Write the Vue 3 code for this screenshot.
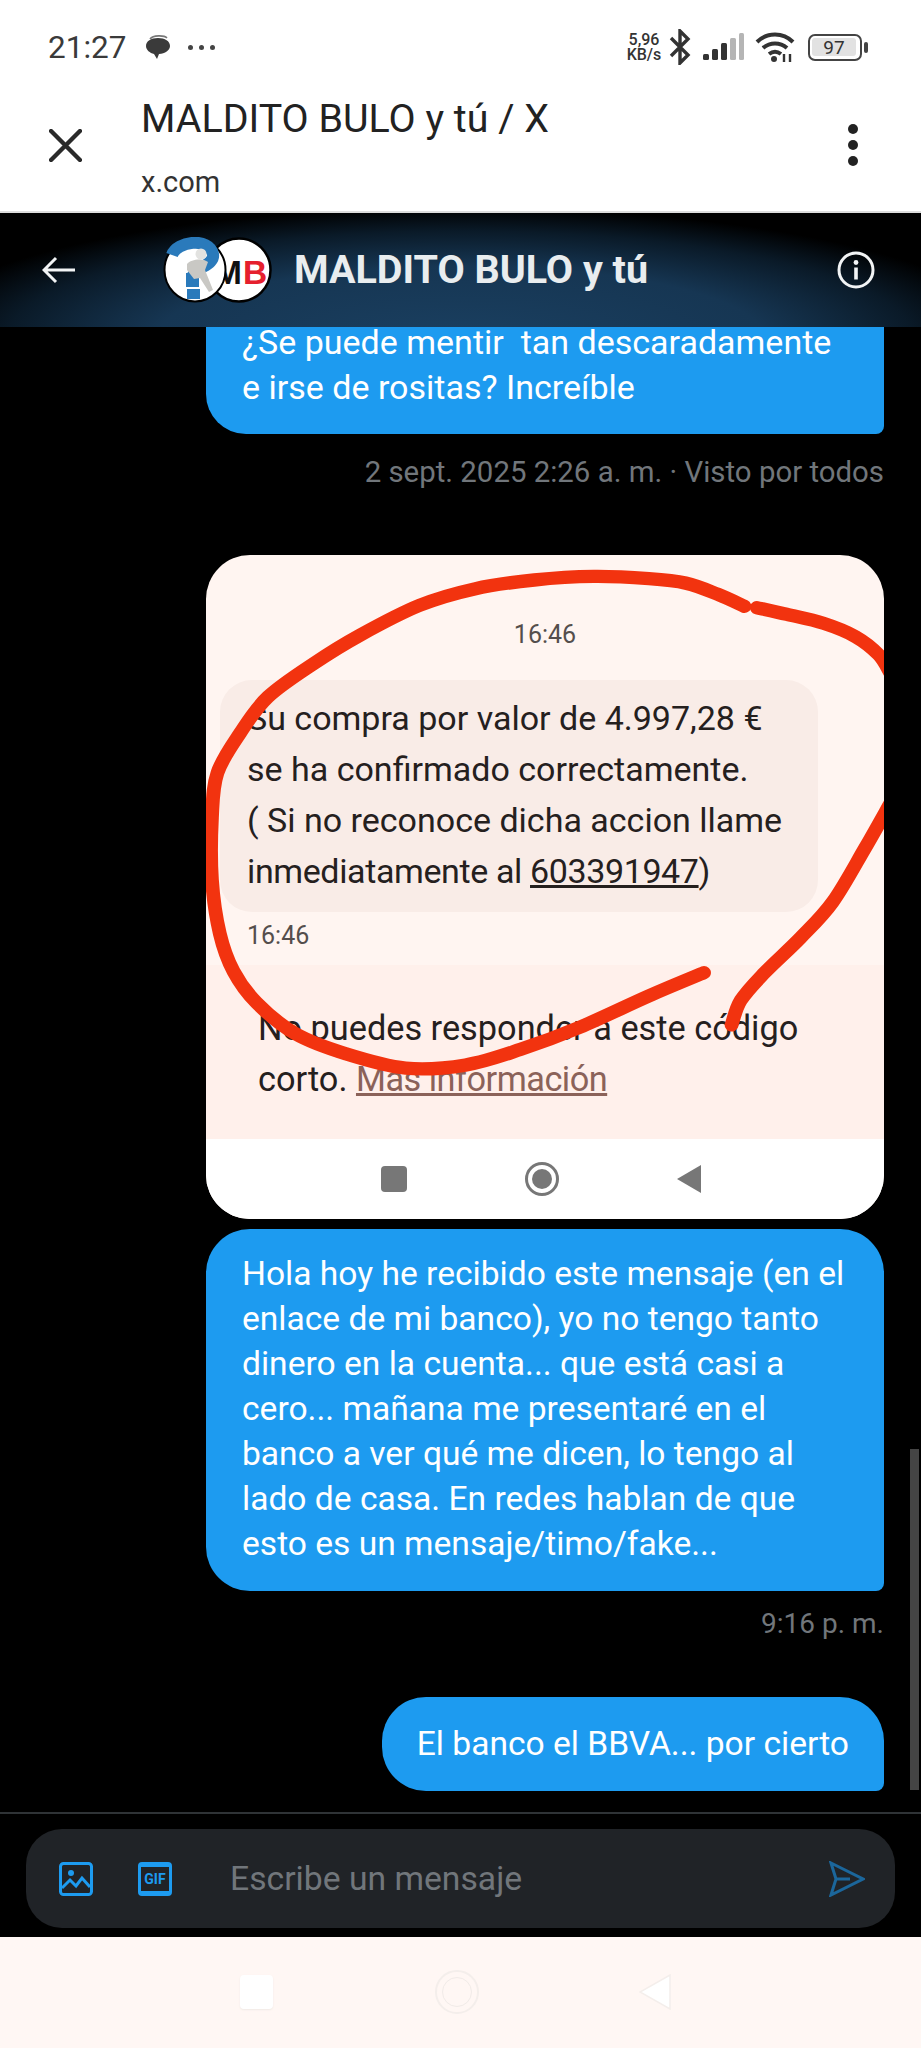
<script setup>
const smooth = (p) => {
  let d = `M${p[0][0]} ${p[0][1]}`
  for (let i = 0; i < p.length - 1; i++) {
    const a = p[Math.max(i - 1, 0)], b = p[i], c = p[i + 1], e = p[Math.min(i + 2, p.length - 1)]
    const c1 = [b[0] + (c[0] - a[0]) / 6, b[1] + (c[1] - a[1]) / 6]
    const c2 = [c[0] - (e[0] - b[0]) / 6, c[1] - (e[1] - b[1]) / 6]
    d += ` C${c1[0]} ${c1[1]} ${c2[0]} ${c2[1]} ${c[0]} ${c[1]}`
  }
  return d
}
const strokes = [
  [[1525,295],[1500,255],[1450,215],[1380,185],[1300,165],[1235,150]],
  [[1208,147],[1150,120],[1080,95],[1000,85],[880,80],[750,88],[620,108],[500,145],[370,212],[270,275],[170,350],[110,430],[60,520],[48,620],[48,760],[65,880],[95,965],[145,1035],[230,1105],[340,1150],[470,1182],[600,1175],[720,1140],[850,1090],[1000,1020],[1120,968]],
  [[1525,590],[1470,690],[1400,810],[1330,890],[1250,970],[1200,1030],[1180,1085]]
].map(smooth)
</script>

<template>
  <div class="screen">
    <div class="status">
      <div class="status-left">
        <span class="clock">21:27</span>
        <svg class="bubble-ic" viewBox="0 0 26 24">
          <path d="M5 4C8 0 19 0 22 3" fill="none" stroke="#777" stroke-width="1.6"/>
          <path d="M13 3C6 3 1 6 1 11c0 4 4 7 8 8l3 5 2-5c6 0 11-4 11-8 0-5-5-8-12-8z" fill="#3a3a3a"/>
        </svg>
        <span class="dots"><i></i><i></i><i></i></span>
      </div>
      <div class="status-right">
        <div class="speed"><span>5,96</span><span>KB/s</span></div>
        <svg class="bt" viewBox="0 0 22 36"><path d="M2 9l17 17-8 8V2l8 8L2 27" fill="none" stroke="#333" stroke-width="3.4"/></svg>
        <svg class="signal" viewBox="0 0 42 28">
          <rect x="0" y="21" width="6" height="6" rx="1.5" fill="#333"/>
          <rect x="9" y="16" width="6" height="11" rx="1.5" fill="#333"/>
          <rect x="18" y="10" width="6" height="17" rx="1.5" fill="#333"/>
          <rect x="27" y="5" width="6" height="22" rx="1.5" fill="#b5b5b5"/>
          <rect x="36" y="0" width="5" height="27" rx="1.5" fill="#b5b5b5"/>
        </svg>
        <svg class="wifi" viewBox="0 0 40 30">
          <path d="M2 10C12 0 28 0 38 10M8 16c7-6 17-6 24 0M14 22c4-3 8-3 12 0" fill="none" stroke="#333" stroke-width="4"/>
          <circle cx="19" cy="27" r="3" fill="#333"/>
          <path d="M29 22v8M35 22v8" stroke="#333" stroke-width="2.4"/>
        </svg>
        <div class="battery"><div class="batt-body"><span class="batt-fill">97</span></div><i class="batt-nub"></i></div>
      </div>
    </div>

    <div class="titlebar">
      <svg class="close" viewBox="0 0 32 32"><path d="M2 2l28 28M30 2L2 30" stroke="#2a2a2a" stroke-width="4.2" stroke-linecap="round" fill="none"/></svg>
      <div class="title-text">
        <div class="page-title">MALDITO BULO y tú / X</div>
        <div class="page-url">x.com</div>
      </div>
      <div class="kebab"><i></i><i></i><i></i></div>
    </div>

    <div class="chat-head">
      <svg class="back" viewBox="0 0 34 28"><path d="M33 14H3M14 2L2 14l12 12" fill="none" stroke="#f2f4f5" stroke-width="3"/></svg>
      <div class="avatars">
        <svg class="av av-right" viewBox="0 0 66 66">
          <circle cx="33" cy="33" r="31.5" fill="#fff" stroke="#000" stroke-width="2.5"/>
          <text x="8" y="47" font-family="Liberation Sans" font-weight="700" font-size="33.5" fill="#111">M</text>
          <text x="37" y="47" font-family="Liberation Sans" font-weight="700" font-size="33.5" fill="#e5202e">B</text>
        </svg>
        <svg class="av av-left" viewBox="0 0 64 66">
          <ellipse cx="32" cy="33" rx="30.5" ry="31.5" fill="#fff" stroke="#000" stroke-width="2"/>
          <path d="M9 18C14 4 46 0 50 17c2 11-17 13-21 23" fill="none" stroke="#2a7abb" stroke-width="12"/>
          <rect x="23" y="36" width="13" height="14" fill="#2a7abb"/>
          <rect x="24" y="52" width="13" height="10" fill="#2a7abb"/>
          <circle cx="38" cy="17" r="5.5" fill="#e2e2e0"/>
          <path d="M24 27c4-5 16-6 21-2l-3 8 8 20-4 2-9-14-6 1-7-9z" fill="#c9c8c4"/>
        </svg>
      </div>
      <div class="chat-name">MALDITO BULO y tú</div>
      <svg class="info" viewBox="0 0 38 38">
        <circle cx="19" cy="19" r="17" fill="none" stroke="#f2f4f5" stroke-width="3"/>
        <circle cx="19" cy="11.5" r="2.4" fill="#f2f4f5"/>
        <rect x="17.2" y="16.5" width="3.6" height="12" fill="#f2f4f5"/>
      </svg>
    </div>

    <div class="messages">
      <div class="bubble first"><span class="first-line">¿Se puede mentir&nbsp; tan descaradamente</span>e irse de rositas? Increíble</div>
      <div class="stamp">2 sept. 2025 2:26 a. m. · Visto por todos</div>

      <div class="shot">
        <div class="shot-time">16:46</div>
        <div class="sms">Su compra por valor de 4.997,28 €<br>se ha confirmado correctamente.<br>( Si no reconoce dicha accion llame<br><span class="tight">inmediatamente al <u>603391947</u>)</span></div>
        <div class="sms-time">16:46</div>
        <div class="notice">No puedes responder a este código<br>corto. <span class="notice-link">Más información</span></div>
        <div class="shot-nav">
          <i class="sn-square"></i>
          <i class="sn-circle"><b></b></i>
          <svg class="sn-tri" viewBox="0 0 24 28"><path d="M24 0v28L0 14z" fill="#777"/></svg>
        </div>
        <svg class="scribble" viewBox="35 32 1477 1488" preserveAspectRatio="none">
          <path v-for="(d, i) in strokes" :key="i" :d="d" fill="none" stroke="#f2330f" stroke-width="30" stroke-linecap="round" stroke-linejoin="round"/>
        </svg>
      </div>

      <div class="bubble long">Hola hoy he recibido este mensaje (en el<br>enlace de mi banco), yo no tengo tanto<br>dinero en la cuenta... que está casi a<br>cero... mañana me presentaré en el<br>banco a ver qué me dicen, lo tengo al<br>lado de casa. En redes hablan de que<br>esto es un mensaje/timo/fake...</div>
      <div class="stamp second">9:16 p. m.</div>
      <div class="bubble short">El banco el BBVA... por cierto</div>
      <div class="scrollbar"></div>
    </div>

    <div class="composer-wrap">
      <div class="composer">
        <svg class="c-ic" viewBox="0 0 34 34">
          <rect x="1.5" y="1.5" width="31" height="31" rx="3" fill="none" stroke="#1d9bf0" stroke-width="3"/>
          <circle cx="12" cy="11" r="3" fill="#1d9bf0"/>
          <path d="M3 26l8-8 6 6 6-8 8 9" fill="none" stroke="#1d9bf0" stroke-width="3"/>
        </svg>
        <div class="gif"><span>GIF</span></div>
        <div class="placeholder">Escribe un mensaje</div>
        <svg class="send" viewBox="0 0 36 36"><path d="M2 2l32 16L2 34l5-16zM7 18h14" fill="none" stroke="#1b669b" stroke-width="3"/></svg>
      </div>
    </div>

    <div class="navbar">
      <i class="nb-square"></i>
      <i class="nb-circle"><b></b></i>
      <svg class="nb-tri" viewBox="0 0 32 36"><path d="M31 1v34L1 18z" fill="#fff" stroke="#f4eeeb" stroke-width="1.5"/></svg>
    </div>
  </div>
</template>

<style scoped>
.screen { width: 921px; height: 2048px; display: flex; flex-direction: column; background: #000; overflow: hidden; font-family: Roboto, "Liberation Sans", sans-serif; }

.status { height: 70px; flex: none; padding: 24px 53px 0 48px; box-sizing: border-box; background: #fff; display: flex; align-items: center; justify-content: space-between; }
.status-left { display: flex; align-items: center; }
.clock { font-size: 31.5px; color: #3a3a3a; }
.bubble-ic { width: 26px; height: 24px; margin-left: 19px; }
.dots { display: flex; gap: 6px; margin-left: 17px; }
.dots i { display: block; width: 5px; height: 5px; border-radius: 50%; background: #444; }
.status-right { display: flex; align-items: center; }
.speed { display: flex; flex-direction: column; font-size: 16px; line-height: 15px; color: #333; font-weight: 500; width: 36px; text-align: center; }
.bt { width: 22px; height: 36px; margin-left: 7px; }
.signal { width: 42px; height: 28px; margin-left: 12px; }
.wifi { width: 40px; height: 30px; margin-left: 10px; }
.battery { display: flex; align-items: center; margin-left: 13px; }
.batt-body { width: 54px; height: 27px; box-sizing: border-box; border: 2.5px solid #444; border-radius: 7px; padding: 2px; }
.batt-fill { display: block; width: 44px; height: 18px; line-height: 19px; background: #e2e2e2; border-radius: 3px; color: #333; font-size: 19px; text-align: center; }
.batt-nub { display: block; width: 4px; height: 11px; background: #444; border-radius: 2px; margin-left: 2px; }

.titlebar { height: 143px; flex: none; box-sizing: border-box; background: #fff; border-bottom: 2px solid #ddd; display: flex; align-items: center; padding: 0 63px 0 49px; position: relative; }
.close { width: 33px; height: 33px; flex: none; margin-top: 9px; }
.title-text { margin-left: 59px; margin-top: 14px; flex: 1; }
.page-title { font-size: 39.4px; line-height: 44px; color: #222; }
.page-url { font-size: 29px; line-height: 34px; color: #333; margin-top: 24px; }
.kebab { display: flex; flex-direction: column; gap: 6px; margin-top: 9px; }
.kebab i { display: block; width: 10px; height: 10px; border-radius: 50%; background: #222; }

.chat-head { height: 114px; flex: none; display: flex; align-items: center; padding: 0 46px 0 42px; background: radial-gradient(ellipse 60% 115% at 50% 110%, #1a3f60 0%, #163653 55%, #0a1a28 82%, #000 100%); }
.back { width: 34px; height: 28px; flex: none; }
.avatars { position: relative; width: 109px; height: 66px; margin-left: 87px; flex: none; }
.av { position: absolute; top: 0; height: 66px; }
.av-left { left: 0; width: 64px; }
.av-right { left: 43px; width: 66px; }
.chat-name { margin-left: 22px; margin-bottom: 2px; font-size: 39.5px; font-weight: 700; color: #e9edef; flex: 1; }
.info { width: 38px; height: 38px; flex: none; }

.messages { position: relative; flex: 1; min-height: 0; padding: 0 37px 0 206px; display: flex; flex-direction: column; align-items: flex-end; overflow: hidden; }
.bubble { flex: none; background: #1d9bf0; color: #fff; font-size: 33.6px; line-height: 45px; box-sizing: border-box; padding: 0 36px; white-space: nowrap; }
.first { width: 678px; height: 107px; border-radius: 0 0 8px 40px; font-size: 34px; }
.first-line { display: block; line-height: 30px; margin-bottom: 8px; }
.stamp { flex: none; font-size: 29.4px; line-height: 34px; color: #71767b; margin-top: 21px; }
.second { margin-top: 16px; font-size: 28px; }

.shot { position: relative; width: 678px; height: 664px; margin-top: 66px; background: #fff5f1; border-radius: 44px; overflow: hidden; flex: none; color: #25201e; }
.shot-time { height: 30px; margin-top: 65px; line-height: 30px; font-size: 25px; text-align: center; color: #544e4c; }
.sms { margin: 30px 66px 0 14px; height: 232px; box-sizing: border-box; padding: 13px 0 0 27px; background: #f9ece7; border-radius: 32px; font-size: 34px; line-height: 51px; }
.tight { letter-spacing: -0.38px; }
.sms-time { margin: 9px 0 0 41px; height: 30px; line-height: 30px; font-size: 25px; color: #544e4c; }
.notice { margin-top: 14px; height: 174px; box-sizing: border-box; padding: 38px 0 0 52px; background: #fff0eb; font-size: 34.3px; line-height: 51px; }
.notice-link { color: #8b6259; text-decoration: underline; letter-spacing: -0.5px; }
.shot-nav { height: 80px; background: #fff; display: flex; align-items: center; padding-left: 175px; gap: 118px; }
.sn-square { display: block; width: 26px; height: 26px; border-radius: 4px; background: #777; }
.sn-circle { display: flex; align-items: center; justify-content: center; width: 34px; height: 34px; box-sizing: border-box; border: 3px solid #777; border-radius: 50%; }
.sn-circle b { display: block; width: 20px; height: 20px; border-radius: 50%; background: #777; }
.sn-tri { width: 24px; height: 28px; }
.scribble { position: absolute; inset: 0; width: 678px; height: 664px; pointer-events: none; }

.long { width: 678px; height: 362px; margin-top: 10px; padding-top: 22px; border-radius: 44px 44px 8px 44px; }
.short { height: 94px; line-height: 94px; margin-top: 56px; padding: 0 35px; border-radius: 44px 44px 8px 44px; }
.scrollbar { position: absolute; right: 2px; top: 1122px; width: 9px; height: 341px; background: #444; }

.composer-wrap { height: 125px; flex: none; box-sizing: border-box; border-top: 2px solid #2f3336; padding: 15px 26px 0; background: #000; }
.composer { height: 99px; background: #202327; border-radius: 36px; display: flex; align-items: center; padding: 0 30px 0 33px; }
.c-ic { width: 34px; height: 34px; flex: none; }
.gif { width: 34px; height: 34px; box-sizing: border-box; margin-left: 45px; border: 3px solid #1d9bf0; border-top-width: 5px; border-bottom-width: 5px; border-radius: 4px; color: #1d9bf0; font-size: 14px; font-weight: 700; display: flex; align-items: center; justify-content: center; flex: none; }
.placeholder { margin-left: 58px; font-size: 33.7px; color: #71767b; flex: 1; }
.send { width: 36px; height: 36px; flex: none; }

.navbar { height: 111px; flex: none; background: #fff7f4; display: flex; align-items: center; padding-left: 240px; padding-bottom: 1px; box-sizing: border-box; }
.nb-square { display: block; width: 33px; height: 34px; background: #fff; border-radius: 4px; box-shadow: 0 1px 2px #f0e9e6; }
.nb-circle { display: flex; align-items: center; justify-content: center; width: 44px; height: 44px; box-sizing: border-box; margin-left: 162px; border-radius: 50%; border: 2px solid #f4eeeb; background: #fff7f4; }
.nb-circle b { display: block; width: 28px; height: 28px; border-radius: 50%; border: 1px solid #f1ebe8; }
.nb-tri { width: 32px; height: 36px; margin-left: 160px; }
</style>
